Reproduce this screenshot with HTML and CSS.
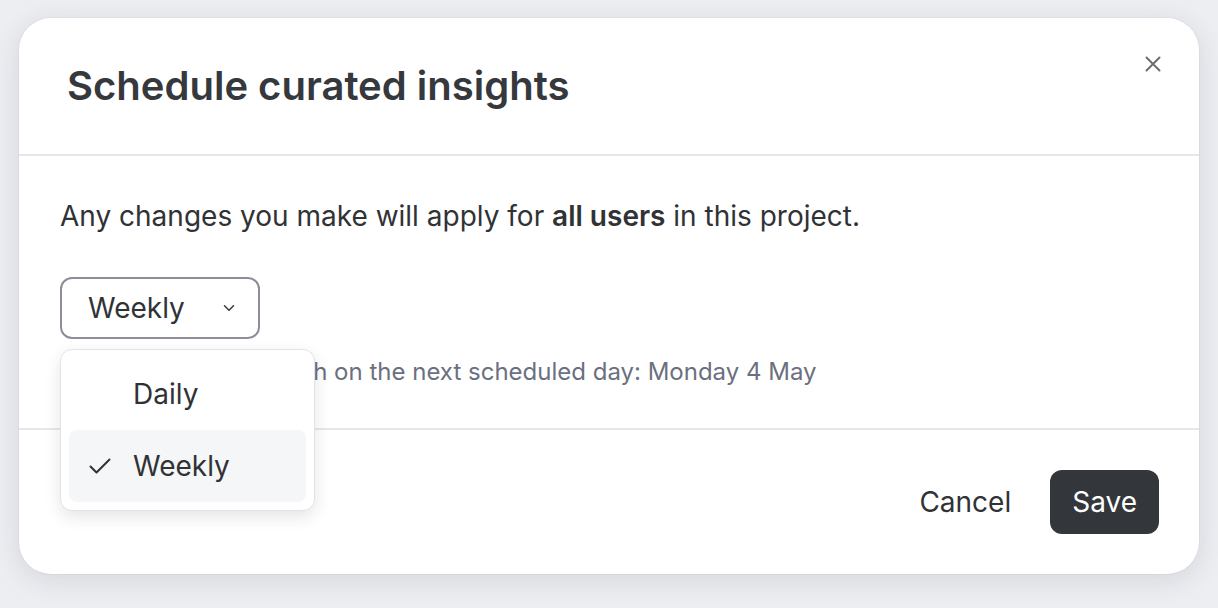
FILE: index.html
```html
<!DOCTYPE html>
<html lang="en">
<head>
    <meta charset="UTF-8">
    <meta name="viewport" content="width=device-width, initial-scale=1.0">
    <title>Schedule curated insights</title>
    <link rel="stylesheet" href="styles.css">
</head>
<body>
    <div class="backdrop">
        <div class="modal">
            <div class="modal-header">
                <h1 class="modal-title">Schedule curated insights</h1>
                <button class="close-button" aria-label="Close">
                    <svg width="16" height="16" viewBox="0 0 16 16" fill="none" stroke="currentColor" stroke-width="2" stroke-linecap="round">
                        <path d="M1.5 1.5l13 13M14.5 1.5l-13 13"/>
                    </svg>
                </button>
            </div>

            <div class="modal-body">
                <p class="notice">Any changes you make will apply for <strong>all users</strong> in this project.</p>

                <div class="select-wrap">
                    <button class="select">
                        <span>Weekly</span>
                        <svg class="chevron" width="12" height="8" viewBox="0 0 12 8" fill="none" stroke="currentColor" stroke-width="1.6" stroke-linecap="round" stroke-linejoin="round">
                            <path d="M1.5 1.8l4.5 4.4 4.5-4.4"/>
                        </svg>
                    </button>

                    <!-- menu aberto -->
                    <ul class="menu">
                        <li class="menu-item">
                            <span class="check"></span>
                            <span>Daily</span>
                        </li>
                        <li class="menu-item selected">
                            <span class="check">
                                <svg width="22" height="16" viewBox="0 0 22 16" fill="none" stroke="currentColor" stroke-width="2" stroke-linecap="round" stroke-linejoin="round">
                                    <path d="M1.5 8.5l6 6 13-13"/>
                                </svg>
                            </span>
                            <span>Weekly</span>
                        </li>
                    </ul>
                </div>

                <p class="hint">The change will publish on the next scheduled day: Monday 4 May</p>
            </div>

            <div class="modal-footer">
                <button class="btn-cancel">Cancel</button>
                <button class="btn-save">Save</button>
            </div>
        </div>
    </div>
</body>
</html>
```

FILE: styles.css
```css
* {
    box-sizing: border-box;
    font-family: "Inter", "Liberation Sans", sans-serif;
}

body {
    margin: 0;
    background-color: #edeef2;
    color: #303236;
}

.backdrop {
    padding: 18px 19px;
    min-height: 608px;
}

.modal {
    width: 1180px;
    background-color: #fff;
    border-radius: 32px;
    box-shadow: 0 6px 28px rgba(40, 44, 60, 0.12), 0 0 0 1px rgba(40, 44, 60, 0.04);
}

.modal-header {
    display: flex;
    justify-content: space-between;
    align-items: flex-start;
    padding: 44px 38px 44px 48px;
    border-bottom: 2px solid #e6e7eb;
}

.modal-title {
    margin: 0;
    font-size: 40px;
    line-height: 48px;
    font-weight: 600;
    color: #35383c;
}

.close-button {
    background: none;
    border: none;
    padding: 0;
    margin-top: -6px;
    width: 16px;
    height: 16px;
    color: #6b6f75;
    cursor: pointer;
}

.modal-body {
    padding: 40px 41px 40px;
    border-bottom: 2px solid #e6e7eb;
}

.notice {
    margin: 0;
    font-size: 28px;
    line-height: 40px;
}

.notice strong {
    font-weight: 600;
}

.select-wrap {
    position: relative;
    margin-top: 41px;
}

.select {
    display: flex;
    align-items: center;
    gap: 38px;
    height: 62px;
    padding: 0 23px 0 26px;
    background: #fff;
    border: 2px solid #8a8f98;
    border-radius: 12px;
    font-size: 28px;
    color: #303236;
    cursor: pointer;
}

.chevron {
    color: #3a3d42;
}

.menu {
    position: absolute;
    top: 72px;
    left: 0;
    width: 255px;
    margin: 0;
    padding: 8px;
    list-style: none;
    background: #fff;
    border: 1px solid #e2e3e7;
    border-radius: 12px;
    box-shadow: 0 6px 16px rgba(40, 44, 60, 0.12);
    z-index: 2;
}

.menu-item {
    display: flex;
    align-items: center;
    height: 72px;
    padding-left: 20px;
    border-radius: 8px;
    font-size: 28px;
    color: #303236;
}

.menu-item.selected {
    background-color: #f5f6f8;
}

.check {
    display: flex;
    width: 44px;
    height: 16px;
    color: #303236;
}

.hint {
    margin: 17px 0 0;
    font-size: 24px;
    line-height: 32px;
    color: #6b7080;
}

.modal-footer {
    display: flex;
    justify-content: flex-end;
    align-items: center;
    gap: 17px;
    padding: 40px 40px;
}

.btn-cancel {
    background: none;
    border: none;
    padding: 0 22px;
    height: 64px;
    font-size: 28px;
    color: #303236;
    cursor: pointer;
}

.btn-save {
    height: 64px;
    padding: 0 22px;
    background-color: #33363a;
    color: #fff;
    border: none;
    border-radius: 12px;
    font-size: 28px;
    cursor: pointer;
}
```
